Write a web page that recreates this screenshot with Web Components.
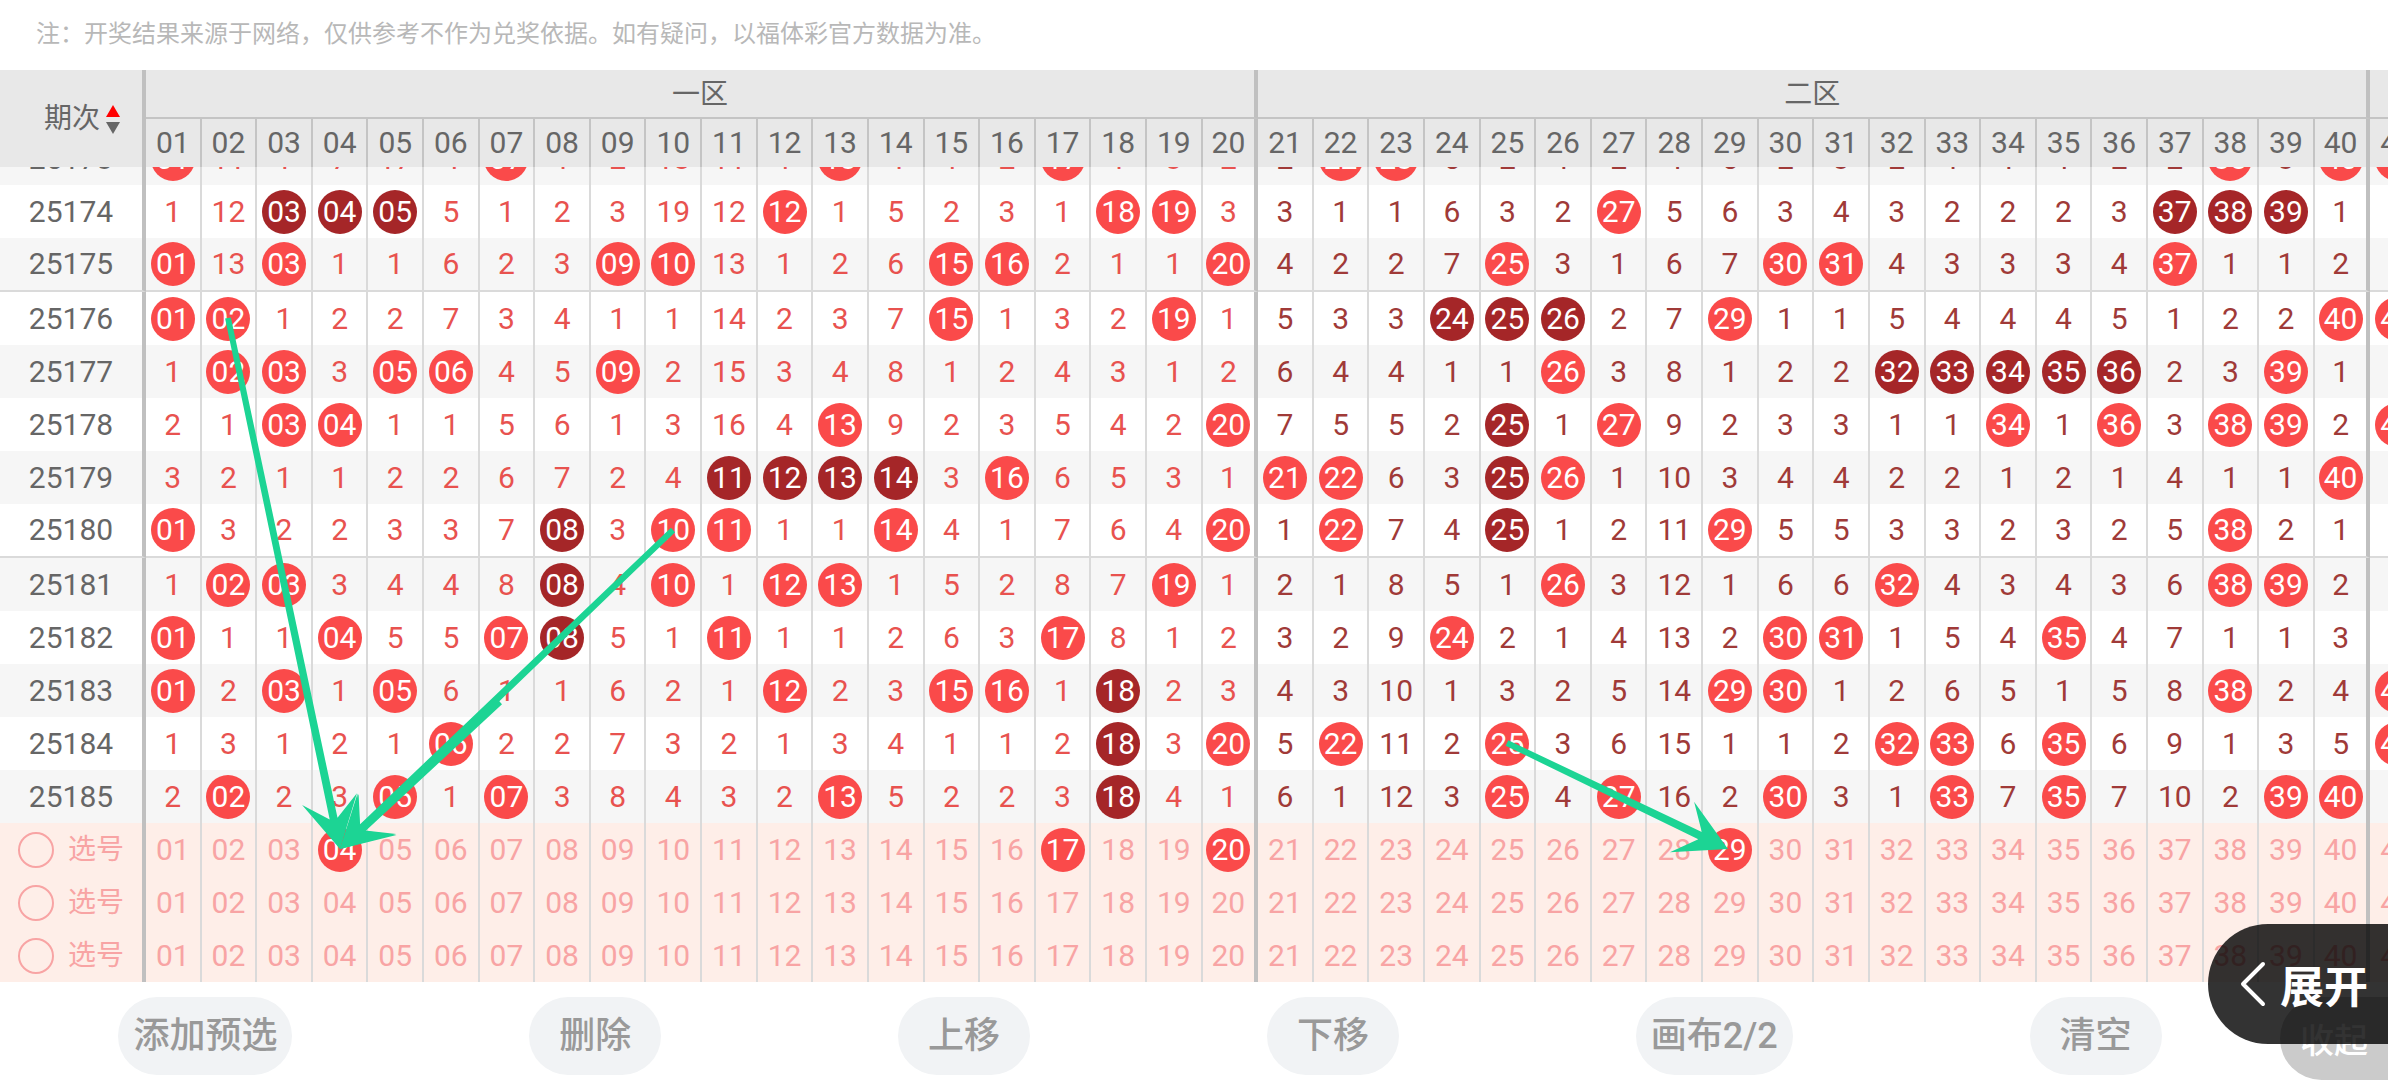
<!DOCTYPE html>
<html lang="zh-CN">
<head>
<meta charset="utf-8">
<title>走势图</title>
<style>
  body {
    margin: 0;
    background: #fff;
    color: #666;
    font-family: Roboto, "Noto Sans CJK SC", sans-serif;
    font-size: 30px;
    overflow: hidden;
  }
</style>
</head>
<body>
<trend-page></trend-page>

<script>
const COLUMNS = 41;

// misses before the first listed draw, one per column
const START = [0,11,1,7,17,4,0,1,2,18,11,1,0,4,1,2,0,1,3,2,
               2,0,0,5,2,1,2,4,5,2,3,2,1,1,1,2,2,0,3,0,0];

// hit: drawn numbers, run: those that belong to a streak
const DRAWS = [
  { id: "25173", hit: [1,7,13,17,22,23,38,40,41], run: [] },
  { id: "25174", hit: [12,18,19,27], run: [3,4,5,37,38,39] },
  { id: "25175", hit: [1,3,9,10,15,16,20,25,30,31,37], run: [], group: true },
  { id: "25176", hit: [1,2,15,19,29,40,41], run: [24,25,26] },
  { id: "25177", hit: [2,3,5,6,9,26,39], run: [32,33,34,35,36] },
  { id: "25178", hit: [3,4,13,20,27,34,36,38,39,41], run: [25] },
  { id: "25179", hit: [16,21,22,26,40], run: [11,12,13,14,25] },
  { id: "25180", hit: [1,10,11,14,20,22,29,38], run: [8,25], group: true },
  { id: "25181", hit: [2,3,10,12,13,19,26,32,38,39], run: [8] },
  { id: "25182", hit: [1,4,7,11,17,24,30,31,35], run: [8] },
  { id: "25183", hit: [1,3,5,12,15,16,29,30,38,41], run: [18] },
  { id: "25184", hit: [6,20,22,25,32,33,35,41], run: [18] },
  { id: "25185", hit: [2,5,7,13,25,27,30,33,35,39,40], run: [18] }
];

const PICKS = [[4,17,20,29], [], []];

// canvas lines: x1, y1, x2, y2
const ARROWS = [
  [228, 186, 340, 717],
  [673, 398, 340, 717],
  [500, 570, 340, 717],
  [1507, 611, 1728, 717]
];

const two = n => String(n).padStart(2, "0");
const numbers = Array.from({ length: COLUMNS }, (_, i) => i + 1);
const edge = n => n % 20 === 0 ? "last" : "";

// rules shared by the header table and the body table
const gridStyle = `
  table {
    width: calc(100% + 38px);
    table-layout: fixed;
    border-collapse: separate;
    border-spacing: 0;
  }
  col.label { width: 146px; }
  th, td {
    box-sizing: border-box;
    padding: 0;
    text-align: center;
    font-weight: 400;
    line-height: 44px;
    border: 0 solid var(--line);
    border-right-width: 2px;
  }
  .label, .last {
    border-right: 4px solid #c0c0c0;
  }
`;

const cols = `<colgroup><col class="label">${numbers.map(() => "<col>").join("")}</colgroup>`;

class TrendHeader extends HTMLElement {
  constructor(){
    super();
    this.attachShadow({ mode: "open" });
  }

  connectedCallback(){
    this.shadowRoot.innerHTML = `
      <style>
        :host {
          --line: #c4c4c4;
          display: block;
          background: #e8e8e8;
        }
        ${gridStyle}
        tr { height: 48px; }
        tr:first-child { height: 49px; }
        .zone {
          padding-top: 2px;
          font-size: 28px;
          border-bottom: 2px solid #c4c4c4;
        }
        .sort {
          display: flex;
          align-items: center;
          justify-content: center;
          gap: 6px;
          width: 100%;
          padding: 0 0 0 22px;
          border: 0;
          background: none;
          color: inherit;
          font: inherit;
          font-size: 28px;
          line-height: 44px;
        }
      </style>
      <table>
        ${cols}
        <thead>
          <tr>
            <th class="label" rowspan="2" scope="col">
              <button class="sort" type="button">期次<svg width="14" height="30" viewBox="0 0 14 30" aria-hidden="true"><path d="M7 1l7 12H0z" fill="#f00"/><path d="M0 18h14L7 30z" fill="#666"/></svg></button>
            </th>
            <th class="zone last" colspan="20" scope="colgroup">一区</th>
            <th class="zone last" colspan="20" scope="colgroup">二区</th>
            <th class="zone"></th>
          </tr>
          <tr>${numbers.map(n => `<th class="${edge(n)}" scope="col">${two(n)}</th>`).join("")}</tr>
        </thead>
      </table>
    `;
  }
}

class TrendBody extends HTMLElement {
  constructor(){
    super();
    this.attachShadow({ mode: "open" });
  }

  drawRows(){
    const miss = START.slice();
    return DRAWS.map((draw, row) => {
      const cells = numbers.map(n => {
        const run = draw.run.includes(n);
        const hit = run || draw.hit.includes(n);
        if (hit) miss[n - 1] = 0;
        else if (row > 0) miss[n - 1]++;
        const text = hit ? `<span class="ball ${run ? "run" : ""}">${two(n)}</span>` : miss[n - 1];
        return `<td class="${edge(n)} ${n > 20 && n < 41 ? "second" : ""}">${text}</td>`;
      }).join("");
      return `<tr class="${draw.group ? "group" : ""}"><th class="label" scope="row">${draw.id}</th>${cells}</tr>`;
    }).join("");
  }

  pickRows(){
    return PICKS.map(picked => {
      const cells = numbers.map(n =>
        `<td class="${edge(n)}"><button type="button" class="${picked.includes(n) ? "ball" : ""}">${two(n)}</button></td>`
      ).join("");
      return `<tr class="pick"><th class="label" scope="row"><label><input type="radio" name="pick">选号</label></th>${cells}</tr>`;
    }).join("");
  }

  arrow([x1, y1, x2, y2]){
    const len = Math.hypot(x2 - x1, y2 - y1);
    const ux = (x2 - x1) / len;
    const uy = (y2 - y1) / len;
    // back: distance from the tip, side: distance from the axis
    const at = (back, side) => `${(x2 - ux * back - uy * side).toFixed(1)},${(y2 - uy * back + ux * side).toFixed(1)}`;
    return `<polygon points="${[at(len, 3), at(31, 4), at(51, 28), at(0, 0), at(51, -28), at(31, -4), at(len, -3)].join(" ")}"/>`;
  }

  connectedCallback(){
    this.shadowRoot.innerHTML = `
      <style>
        :host {
          --line: #dadada;
          display: block;
          overflow: hidden;
        }
        /* the first row is scrolled under the header */
        .scroll {
          position: relative;
          margin-top: -35px;
        }
        ${gridStyle}
        tr { height: 53px; }
        tr:nth-child(odd) { background: #f6f6f6; }
        .group { height: 54px; }
        .group > * { border-bottom: 2px solid #dadada; }
        td { color: #e8524f; }
        .second { color: #a03a38; }
        th { color: #666; }
        .ball {
          display: block;
          width: 44px;
          height: 44px;
          margin: 0 auto;
          border-radius: 50%;
          background: #fa4a4a;
          color: #fff;
        }
        .run { background: #a52628; }
        tr.pick { background: #feeee8; }
        .pick td, .pick th { color: #f8a4a4; }
        button {
          display: block;
          width: 44px;
          height: 44px;
          margin: 0 auto;
          padding: 0;
          border: 0;
          background: none;
          color: inherit;
          font: inherit;
          line-height: 44px;
        }
        .pick .ball { color: #fff; }
        label {
          display: flex;
          align-items: center;
          justify-content: center;
          gap: 14px;
          font-size: 28px;
        }
        input {
          appearance: none;
          box-sizing: border-box;
          width: 36px;
          height: 36px;
          margin: 0;
          border: 2px solid #f8a4a4;
          border-radius: 50%;
        }
        svg {
          position: absolute;
          inset: 0;
          width: 100%;
          height: 100%;
          fill: #1cd494;
          pointer-events: none;
        }
      </style>
      <div class="scroll">
        <table>
          ${cols}
          <tbody>${this.drawRows()}${this.pickRows()}</tbody>
        </table>
        <svg viewBox="0 0 2388 850" preserveAspectRatio="none" aria-hidden="true">${ARROWS.map(a => this.arrow(a)).join("")}</svg>
      </div>
    `;
  }
}

class ToolButton extends HTMLElement {
  constructor(){
    super();
    this.attachShadow({ mode: "open" });
    this.shadowRoot.innerHTML = `
      <style>
        :host { display: block; }
        button {
          min-width: 132px;
          height: 78px;
          padding: 0 15px;
          border: 0;
          border-radius: 39px;
          background: #f1f3f5;
          color: #999;
          font: inherit;
          font-size: 36px;
          font-weight: 500;
          line-height: 44px;
          white-space: nowrap;
        }
      </style>
      <button type="button"><slot></slot></button>
    `;
  }
}

class SideTab extends HTMLElement {
  constructor(){
    super();
    this.attachShadow({ mode: "open" });
    this.shadowRoot.innerHTML = `
      <style>
        :host {
          display: block;
        }
        button {
          display: flex;
          align-items: center;
          gap: var(--tab-gap, 0);
          box-sizing: border-box;
          width: 100%;
          height: var(--tab-height);
          padding: 0 0 0 var(--tab-pad);
          border: 0;
          border-radius: 60px 0 0 60px;
          background: var(--tab-color);
          color: #fff;
          font: inherit;
          font-size: var(--tab-font);
          font-weight: var(--tab-weight);
          white-space: nowrap;
        }
      </style>
      <button type="button"><slot name="icon"></slot><slot></slot></button>
    `;
  }
}

class TrendPage extends HTMLElement {
  constructor(){
    super();
    this.attachShadow({ mode: "open" });
    this.shadowRoot.innerHTML = `
      <style>
        :host {
          display: block;
          position: relative;
          overflow: hidden;
        }
        .note {
          margin: 0;
          padding: 16px 36px 18px;
          color: #b8b8b8;
          font-size: 24px;
          line-height: 36px;
        }
        .chart { overflow: hidden; }
        .bar {
          display: flex;
          height: 83px;
          padding-top: 15px;
        }
        .tools {
          display: flex;
          flex: 1;
          justify-content: space-around;
        }
        .fold {
          --tab-height: 83px;
          --tab-pad: 20px;
          --tab-color: #cbcbcb;
          --tab-font: 34px;
          --tab-weight: 500;
          width: 108px;
        }
        .expand {
          --tab-height: 120px;
          --tab-pad: 32px;
          --tab-gap: 14px;
          --tab-color: rgba(0, 0, 0, 0.8);
          --tab-font: 44px;
          --tab-weight: 700;
          position: absolute;
          right: 0;
          bottom: 36px;
          z-index: 2;
          width: 180px;
        }
      </style>
      <p class="note">注：开奖结果来源于网络，仅供参考不作为兑奖依据。如有疑问，以福体彩官方数据为准。</p>
      <div class="chart">
        <trend-header></trend-header>
        <trend-body></trend-body>
      </div>
      <div class="bar">
        <div class="tools">
          <tool-button>添加预选</tool-button>
          <tool-button>删除</tool-button>
          <tool-button>上移</tool-button>
          <tool-button>下移</tool-button>
          <tool-button>画布2/2</tool-button>
          <tool-button>清空</tool-button>
        </div>
        <side-tab class="fold">收起</side-tab>
      </div>
      <side-tab class="expand">
        <svg slot="icon" width="26" height="46" viewBox="0 0 26 46" fill="none" stroke="#fff" stroke-width="4" stroke-linecap="round" stroke-linejoin="round" aria-hidden="true"><path d="M23 3L3 23L23 43"/></svg>
        展开
      </side-tab>
    `;
  }
}

customElements.define("trend-header", TrendHeader);
customElements.define("trend-body", TrendBody);
customElements.define("tool-button", ToolButton);
customElements.define("side-tab", SideTab);
customElements.define("trend-page", TrendPage);
</script>
</body>
</html>
